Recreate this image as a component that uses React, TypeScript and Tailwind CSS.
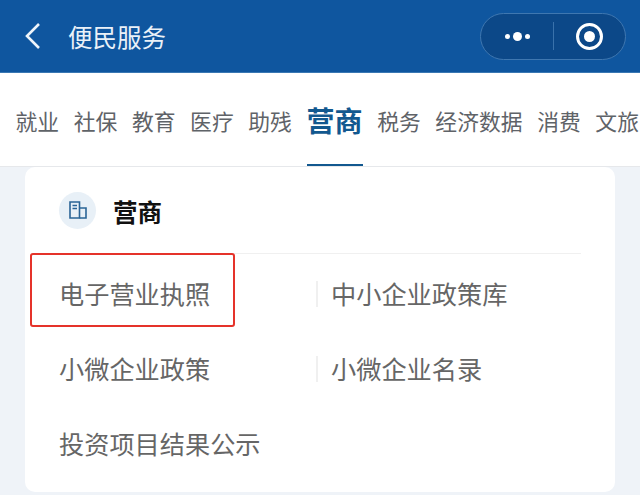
// 便民服务 page
const TABS = ['就业', '社保', '教育', '医疗', '助残', '营商', '税务', '经济数据', '消费', '文旅'];
const ACTIVE_TAB = '营商';

// Left and right column of the service list
const SERVICES = [
  ['电子营业执照', '中小企业政策库'],
  ['小微企业政策', '小微企业名录'],
  ['投资项目结果公示', ''],
];

const FONT = "font-['Liberation_Sans','Noto_Sans_CJK_SC',sans-serif]";

export default function App() {
  return (
    <div className={`w-[640px] h-[495px] overflow-hidden bg-[#eff3f8] ${FONT}`}>
      {/* Header */}
      <div className="h-[73px] bg-[#0f569f] flex items-center pl-[24px] pr-[14px] border-b border-[#3a78b3]">
        <svg width="18" height="28" viewBox="0 0 18 28" fill="none" stroke="#eef4fa" strokeWidth="2.6" className="shrink-0">
          <path d="M15 2 3 14l12 12" />
        </svg>
        <h1 className="ml-[26px] pt-[7px] text-[24.5px] leading-none text-[#eaf1f8]">便民服务</h1>
        {/* Capsule */}
        <div className="ml-auto w-[146px] h-[47px] rounded-full bg-[#0c4888] border border-[#3f77b0] flex items-center">
          <div className="w-[72px] flex items-center justify-center gap-[3px]">
            <span className="w-[5px] h-[5px] rounded-full bg-white" />
            <span className="w-[9px] h-[9px] rounded-full bg-white" />
            <span className="w-[5px] h-[5px] rounded-full bg-white" />
          </div>
          <div className="w-px h-[28px] bg-[#3a72ab]" />
          <div className="flex-1 flex items-center justify-center">
            <div className="w-[27px] h-[27px] rounded-full border-[3px] border-white flex items-center justify-center">
              <span className="w-[11px] h-[11px] rounded-full bg-white" />
            </div>
          </div>
        </div>
      </div>

      {/* Tabs */}
      <div className="h-[94px] bg-white border-b border-[#e6e8eb] flex items-stretch gap-[14.6px] pl-[15.5px] overflow-hidden">
        {TABS.map((tab) =>
          tab === ACTIVE_TAB ? (
            <div
              key={tab}
              className="shrink-0 flex items-center pt-[9px] border-b-[3px] border-[#12588f] text-[28px] font-bold text-[#12588f] -mb-px"
            >
              {tab}
            </div>
          ) : (
            <div key={tab} className="shrink-0 flex items-center pt-[7px] text-[21.8px] text-[#5f6368]">
              {tab}
            </div>
          ),
        )}
      </div>

      {/* Card */}
      <div className="relative mx-[25px] h-[325px] bg-white rounded-[10px] pl-[34px] pr-[34px]">
        <div className="h-[87px] flex items-center border-b border-[#f0f0f0]">
          <div className="w-[37px] h-[37px] rounded-full bg-[#e8f0f7] flex items-center justify-center">
            <svg width="20" height="20" viewBox="0 0 20 20" fill="none" stroke="#2a6496" strokeWidth="1.6">
              <path d="M2 2h9.5v16H2z" />
              <path d="M11.5 8H18v10h-6.500" />
              <path d="M4.500 5.500h4.500M4.500 8.500h4.500" strokeWidth="1.300" />
            </svg>
          </div>
          <h2 className="ml-[17px] pt-[8px] text-[24.5px] leading-none font-bold text-[#111]">营商</h2>
        </div>

        <div className="grid grid-cols-[257px_1fr]">
          {SERVICES.map(([left, right]) => (
            <div key={left} className="contents">
              <div className="h-[75px] flex items-center pt-[8px] text-[25.2px] text-[#666] whitespace-nowrap">{left}</div>
              <div className="h-[75px] flex items-center text-[25.2px] text-[#666] whitespace-nowrap">
                {right && (
                  <>
                    <span className="w-[2px] h-[26px] mt-[4px] bg-[#f0f0f0] mr-[13px]" />
                    <span className="pt-[8px]">{right}</span>
                  </>
                )}
              </div>
            </div>
          ))}
        </div>

        {/* Red highlight round the first item */}
        <div className="absolute left-[5px] top-[86px] w-[205px] h-[74px] border-[2.500px] border-[#e5332a] rounded-[3px]" />
      </div>
    </div>
  );
}
